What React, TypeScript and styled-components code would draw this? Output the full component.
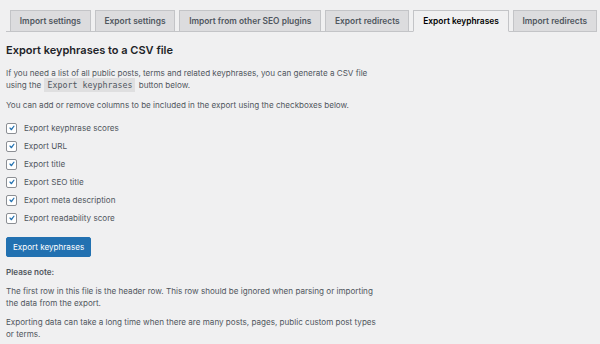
import * as React from 'react';
import styled, {createGlobalStyle} from 'styled-components';

const GlobalStyle = createGlobalStyle`
  html, body {
    margin: 0;
    padding: 0;
    background: #f0f0f1;
  }
  body {
    font-family: Inter, "Liberation Sans", Arial, sans-serif;
    color: #50575e;
  }
`;

const tabs = [
  "Import settings",
  "Export settings",
  "Import from other SEO plugins",
  "Export redirects",
  "Export keyphrases",
  "Import redirects",
];

const columns = [
  "Export keyphrase scores",
  "Export URL",
  "Export title",
  "Export SEO title",
  "Export meta description",
  "Export readability score",
];

const Page = styled.div`
  width: 600px;
  height: 344px;
  overflow: hidden;
  padding: 10px 6px 0;
  box-sizing: border-box;
`;

const TabBar = styled.nav`
  display: flex;
  border-bottom: 1px solid #c3c4c7;
`;

const Tab = styled.div<{active?: boolean}>`
  height: 22px;
  display: flex;
  align-items: center;
  padding: 0 8.8px;
  margin-left: 4px;
  margin-bottom: -1px;
  font-size: 8.4px;
  font-weight: 600;
  box-sizing: border-box;
  border: 1px solid #c3c4c7;
  border-bottom-color: ${props => props.active ? "#f0f0f1" : "#c3c4c7"};
  background: ${props => props.active ? "#f0f0f1" : "#dcdcde"};
  color: ${props => props.active ? "#000" : "#50575e"};
  white-space: nowrap;
`;

const Title = styled.h2`
  margin: 10px 0 0;
  font-size: 11px;
  font-weight: 600;
  line-height: 16px;
  color: #1d2327;
`;

const Text = styled.p<{gap?: number}>`
  margin: ${props => props.gap ?? 8}px 0 0;
  font-size: 8.1px;
  line-height: 12px;
`;

const Code = styled.code`
  font-family: "DejaVu Sans Mono", "Liberation Mono", monospace;
  font-size: 8.3px;
  line-height: 1;
  background: rgba(0, 0, 0, 0.07);
  padding: 2px 3px;
  margin: 0 1px;
`;

const Checks = styled.div`
  display: flex;
  flex-direction: column;
  gap: 6px;
  margin-top: 11px;
`;

const CheckRow = styled.label`
  display: flex;
  align-items: center;
  gap: 7px;
  height: 12px;
  font-size: 8.1px;
`;

const Box = styled.span`
  width: 9px;
  height: 9px;
  border: 1px solid #8c8f94;
  border-radius: 2px;
  background: #fff;
  display: flex;
  align-items: center;
  justify-content: center;
  box-sizing: content-box;
`;

const Button = styled.button`
  display: block;
  margin-top: 13px;
  height: 20px;
  padding: 0 6px;
  background: #2271b1;
  border: 1px solid #2271b1;
  border-radius: 2px;
  color: #fff;
  font-family: inherit;
  font-size: 8.1px;
  line-height: 18px;
`;

const Note = styled.p`
  margin: 9px 0 0;
  font-size: 8.1px;
  font-weight: 600;
  line-height: 12px;
`;

const Check = () => (
  <Box>
    <svg width="12" height="12" viewBox="0 0 20 20">
      <path d="M15.2 4.4l1.9 1.3-6.4 9.3H8.8L4.9 10.2l1.8-1.7 2.9 2.7z" fill="#2271b1" />
    </svg>
  </Box>
);

export default function App() {
  return (
    <>
      <GlobalStyle />
      <Page>
        <TabBar>
          {tabs.map(t => (
            <Tab key={t} active={t === "Export keyphrases"}>{t}</Tab>
          ))}
        </TabBar>
        <Title>Export keyphrases to a CSV file</Title>
        <Text gap={9}>
          If you need a list of all public posts, terms and related keyphrases, you can generate a CSV file
          <br />using the <Code>Export keyphrases</Code> button below.
        </Text>
        <Text>You can add or remove columns to be included in the export using the checkboxes below.</Text>
        <Checks>
          {columns.map(c => (
            <CheckRow key={c}><Check />{c}</CheckRow>
          ))}
        </Checks>
        <Button>Export keyphrases</Button>
        <Note>Please note:</Note>
        <Text gap={7}>
          The first row in this file is the header row. This row should be ignored when parsing or importing
          <br />the data from the export.
        </Text>
        <Text gap={7}>
          Exporting data can take a long time when there are many posts, pages, public custom post types
          <br />or terms.
        </Text>
      </Page>
    </>
  );
}
